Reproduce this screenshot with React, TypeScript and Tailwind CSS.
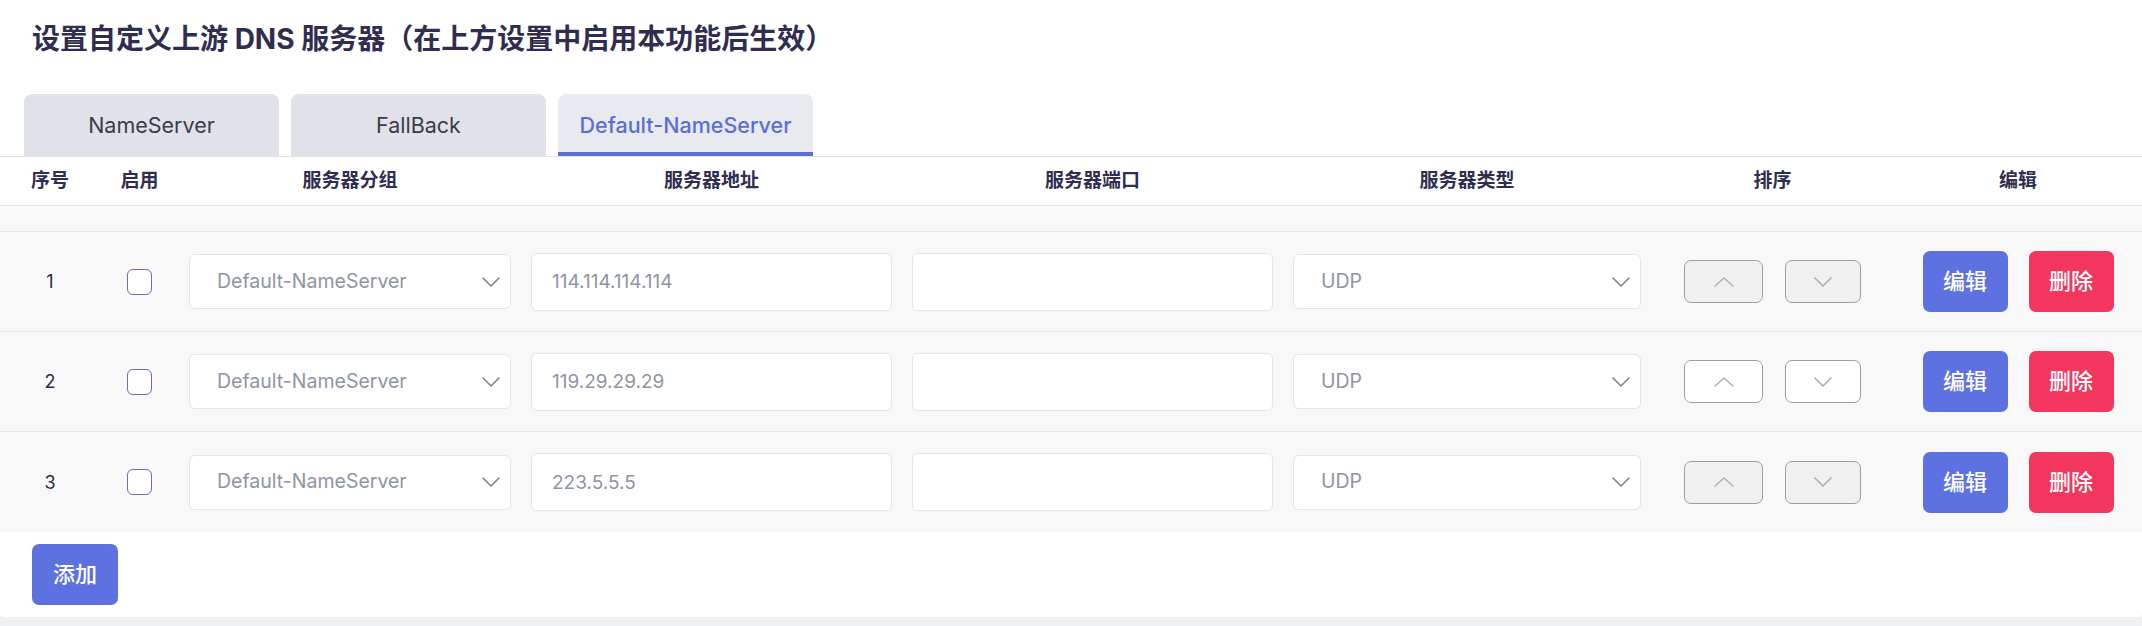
import React from "react";

const font = { fontFamily: '"Inter", "Noto Sans CJK SC", sans-serif' };

const rows = [
  { id: 1, addr: "114.114.114.114", muted: true },
  { id: 2, addr: "119.29.29.29", muted: false },
  { id: 3, addr: "223.5.5.5", muted: true },
];

const cols =
  "grid grid-cols-[100px_79px_342px_381px_381px_368px_243px_248px] items-center";

function ChevronDown({ color = "#7d838f" }: { color?: string }) {
  return (
    <svg width="18" height="10" viewBox="0 0 18 10" fill="none">
      <polyline points="1,1 9,9 17,1" stroke={color} strokeWidth="1.6" strokeLinecap="round" strokeLinejoin="round" />
    </svg>
  );
}

function ChevronUp({ color = "#a9adb4" }: { color?: string }) {
  return (
    <svg width="20" height="10" viewBox="0 0 20 10" fill="none">
      <polyline points="1,9 10,1 19,9" stroke={color} strokeWidth="1.4" strokeLinecap="round" strokeLinejoin="round" />
    </svg>
  );
}

function FakeSelect({ value }: { value: string }) {
  return (
    <div className="h-[55px] w-full bg-white border border-[#e4e5e8] rounded-[6px] flex items-center justify-between pl-[27px] pr-[10px]">
      <span className="text-[19.5px] text-[#8e95a2]">{value}</span>
      <ChevronDown />
    </div>
  );
}

function Row({ row, last }: { row: (typeof rows)[number]; last: boolean }) {
  const sortBtn = row.muted ? "bg-[#f0f0f1]" : "bg-white";
  return (
    <div className={`${cols} h-[100px] bg-[#f8f8f9] ${last ? "" : "border-b border-[#e2e2e5]"}`}>
      <div className="text-center text-[18px] text-[#2c2c3c]">{row.id}</div>
      <div className="flex justify-center">
        <div className="w-[25px] h-[26px] rounded-[6px] border-[1.5px] border-[#6a70ad] bg-white" />
      </div>
      <div className="px-[10px]">
        <FakeSelect value="Default-NameServer" />
      </div>
      <div className="px-[10px]">
        <input
          readOnly
          defaultValue={row.addr}
          className="h-[58px] w-full bg-white border border-[#e4e5e8] rounded-[6px] pl-[20px] text-[19px] text-[#8e95a2] outline-none"
        />
      </div>
      <div className="px-[10px]">
        <input
          readOnly
          defaultValue=""
          className="h-[58px] w-full bg-white border border-[#e4e5e8] rounded-[6px] pl-[20px] text-[19px] outline-none"
        />
      </div>
      <div className="px-[10px]">
        <FakeSelect value="UDP" />
      </div>
      <div className="flex justify-center gap-[22px]">
        <div className={`w-[79px] h-[43px] rounded-[7px] border border-[#9a9ea6] flex items-center justify-center ${sortBtn}`}>
          <ChevronUp />
        </div>
        <div className={`w-[76px] h-[43px] rounded-[7px] border border-[#9a9ea6] flex items-center justify-center ${sortBtn}`}>
          <ChevronDown color="#a9adb4" />
        </div>
      </div>
      <div className="flex justify-center gap-[21px]">
        <button className="w-[85px] h-[61px] rounded-[7px] bg-[#5d71e0] text-white text-[22px] font-medium">编辑</button>
        <button className="w-[85px] h-[61px] rounded-[7px] bg-[#f2365e] text-white text-[22px] font-medium">删除</button>
      </div>
    </div>
  );
}

export default function App() {
  const tabs = ["NameServer", "FallBack", "Default-NameServer"];
  const heads = ["序号", "启用", "服务器分组", "服务器地址", "服务器端口", "服务器类型", "排序", "编辑"];
  return (
    <div className="w-full h-[626px] bg-[#eef0f3]" style={font}>
      <div className="h-[617px] bg-white rounded-b-[4px]">
        <div className="h-[94px] pt-[19px] pl-[32px]">
          <h2 className="leading-[40px] text-[28px] font-bold text-[#2f2d50]">
            设置自定义上游 DNS 服务器（在上方设置中启用本功能后生效）
          </h2>
        </div>

        <div className="flex gap-[12px] px-[24px] border-b border-[#e3e3e6]">
          {tabs.map((t, i) => {
            const active = i === 2;
            return (
              <div
                key={t}
                className={`w-[255px] h-[62px] rounded-t-[8px] flex items-center justify-center text-[21.5px] ${
                  active
                    ? "bg-[#e7eaee] text-[#5b6ed8] font-medium border-b-[4px] border-[#5b6ed8] pt-[4px]"
                    : "bg-[#dfe3e9] text-[#3b3b48]"
                }`}
              >
                {t}
              </div>
            );
          })}
        </div>

        <div className={`${cols} h-[49px] border-b border-[#e3e3e6] bg-white`}>
          {heads.map((h) => (
            <div key={h} className="text-center text-[19px] font-bold text-[#2f2d50]">
              {h}
            </div>
          ))}
        </div>

        <div className="h-[26px] bg-[#f8f8f9] border-b border-[#e2e2e5]" />

        {rows.map((r, i) => (
          <Row key={r.id} row={r} last={i === rows.length - 1} />
        ))}

        <div className="pl-[32px] pt-[12px]">
          <button className="w-[86px] h-[61px] rounded-[7px] bg-[#5d71e0] text-white text-[22px] font-medium">添加</button>
        </div>
      </div>
    </div>
  );
}
